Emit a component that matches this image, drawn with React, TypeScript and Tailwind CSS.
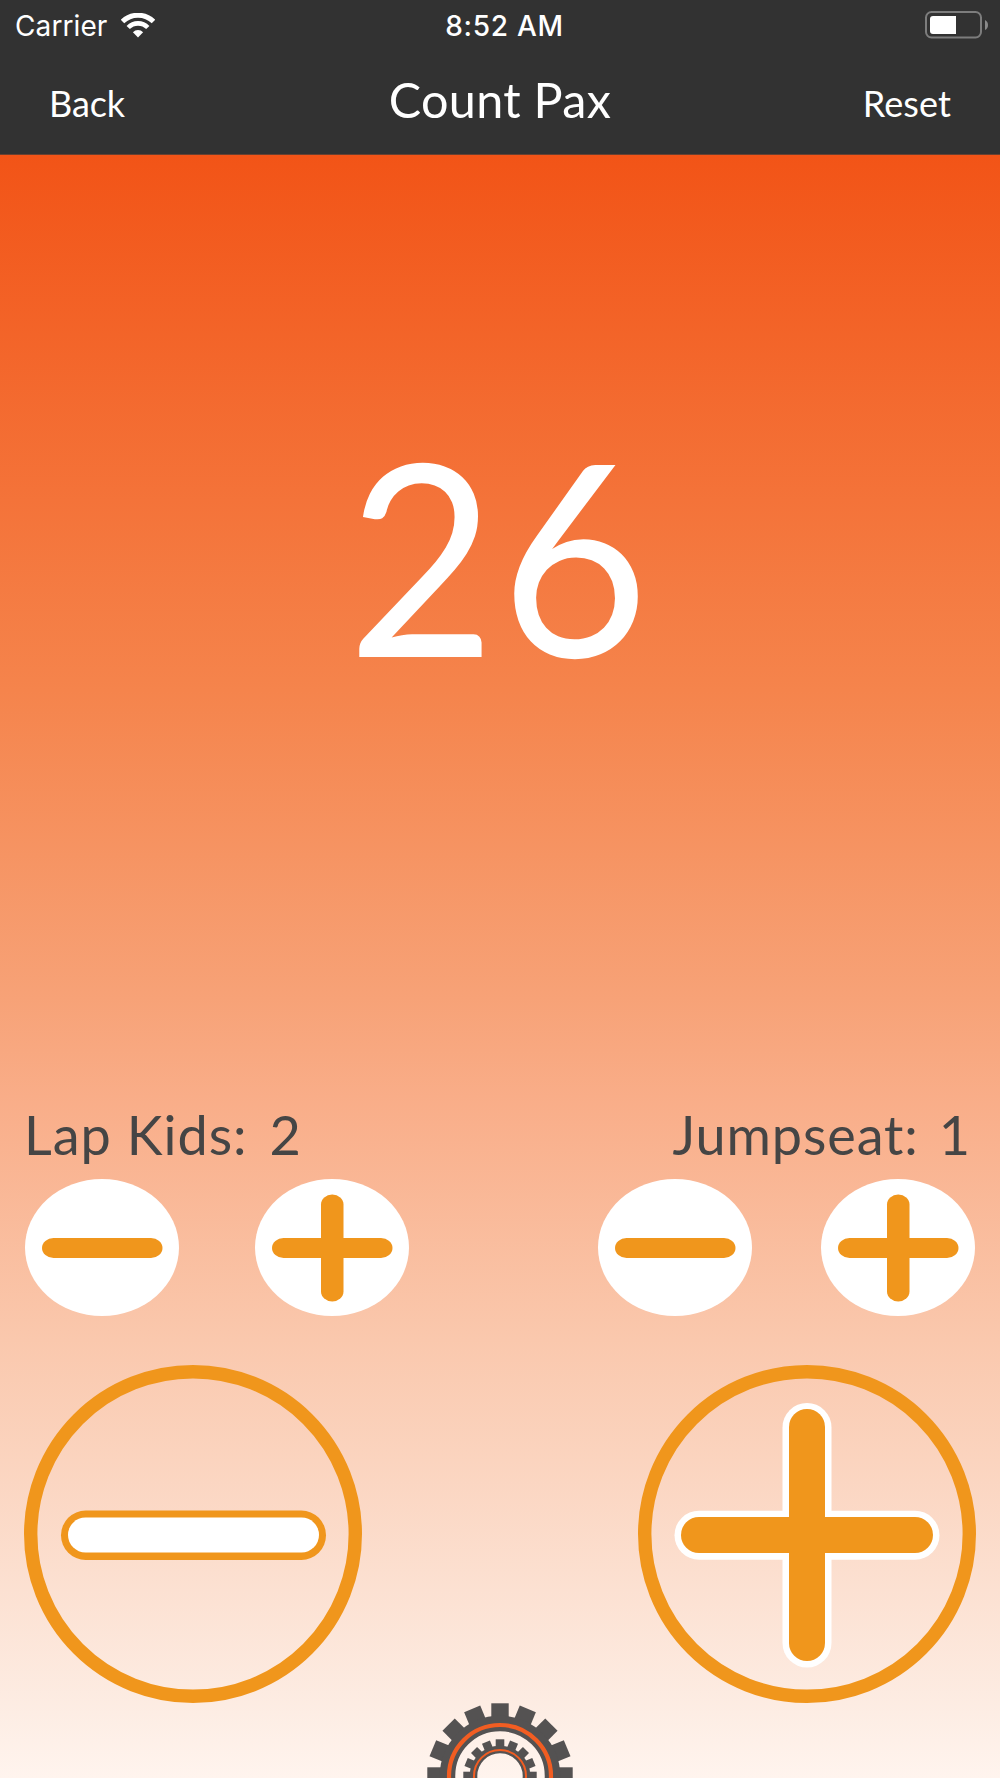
import { useState } from 'react';

const ACCENT = '#f0961c';
const TEETH = Array.from({ length: 16 }, (_, i) => i * 22.5);

function StatusBar() {
  return (
    <div className="grid h-[50px] grid-cols-3 items-center pl-[15px] pr-3 font-['Inter'] text-[28px]">
      <div className="flex items-center gap-3.5">
        <span className="pt-px tracking-[0.1px]">Carrier</span>
        <svg width="34" height="25" viewBox="0 0 34 25" fill="none" stroke="white">
          <path d="M1.5 8.6a22 22 0 0 1 31 0" strokeWidth="5" />
          <path d="M7.2 14.5a13.8 13.8 0 0 1 19.6 0" strokeWidth="4.6" />
          <path d="M11.9 19.2a7.2 7.2 0 0 1 10.2 0L17 24.4z" fill="white" stroke="none" />
        </svg>
      </div>
      <span className="pl-1.5 pt-px text-center font-medium tracking-[0.7px]">8:52 AM</span>
      <div className="flex justify-end">
        <svg width="63" height="28" viewBox="0 0 63 28">
          <rect x="1" y="1" width="55" height="25.5" rx="5.5" fill="none" stroke="#7d7d7d" strokeWidth="2" />
          <path d="M8 5h23v18H8a3 3 0 0 1-3-3V8a3 3 0 0 1 3-3z" fill="white" />
          <path d="M60 9q3 1.500 3 5t-3 5z" fill="#8a8a8a" />
        </svg>
      </div>
    </div>
  );
}

// The small buttons are squashed vertically, so the bars are thinner across than down
function SmallButton({ plus, onClick }: { plus?: boolean; onClick: () => void }) {
  return (
    <button onClick={onClick} aria-label={plus ? 'Add' : 'Remove'}>
      <svg width="154" height="137" viewBox="0 0 154 137" fill={ACCENT}>
        <ellipse cx="77" cy="68.500" rx="77" ry="68.500" fill="white" />
        <rect x="17" y="59" width="120.500" height="20" rx="11.500" ry="10" />
        {plus && <rect x="66" y="15.500" width="22.500" height="107" rx="11.200" ry="10" />}
      </svg>
    </button>
  );
}

function BigButton({ plus, onClick }: { plus?: boolean; onClick: () => void }) {
  return (
    <button onClick={onClick} aria-label={plus ? 'Add passenger' : 'Remove passenger'}>
      <svg width="338" height="338" viewBox="0 0 338 338">
        <circle cx="169" cy="169" r="162.300" fill="none" stroke={ACCENT} strokeWidth="13.400" />
        {plus ? (
          <>
            <g fill="white">
              <rect x="36.500" y="145.700" width="265" height="49" rx="24.500" />
              <rect x="144.500" y="38" width="49" height="264.500" rx="24.500" />
            </g>
            <g fill={ACCENT}>
              <rect x="43" y="152" width="252" height="36" rx="18" />
              <rect x="151" y="44" width="36" height="252" rx="18" />
            </g>
          </>
        ) : (
          <>
            <rect x="37" y="145.500" width="265" height="49.500" rx="24.700" fill={ACCENT} />
            <rect x="44" y="152.500" width="251" height="35" rx="17.500" fill="white" />
          </>
        )}
      </svg>
    </button>
  );
}

function Gear() {
  return (
    <svg width="146" height="75" viewBox="-73 -73 146 75" className="block">
      <g fill="#545252">
        {TEETH.map((a) => (
          <rect key={a} x="-8.700" y="-72.700" width="17.400" height="20" transform={`rotate(${a})`} />
        ))}
      </g>
      <circle r="52.500" fill="none" stroke="#545252" strokeWidth="15.500" />
      <circle r="51" fill="none" stroke="#f25d22" strokeWidth="4.200" />
      <g fill="#545252">
        {TEETH.map((a) => (
          <rect key={a} x="-4.300" y="-36.700" width="8.600" height="10" transform={`rotate(${a})`} />
        ))}
      </g>
      <circle r="26.500" fill="none" stroke="#545252" strokeWidth="7.600" />
      <circle r="26" fill="none" stroke="#f25d22" strokeWidth="2" />
    </svg>
  );
}

export default function App() {
  const [pax, setPax] = useState(26);
  const [lapKids, setLapKids] = useState(2);
  const [jumpseat, setJumpseat] = useState(1);

  const reset = () => {
    setPax(0);
    setLapKids(0);
    setJumpseat(0);
  };

  return (
    <div className="flex h-[1778px] w-[1000px] flex-col overflow-hidden bg-white font-['Lato',sans-serif]">
      <header className="h-[155px] shrink-0 border-b border-[#6b4030] bg-[#323232] text-white">
        <StatusBar />
        <nav className="grid grid-cols-[1fr_auto_1fr] items-center px-[49px]">
          <button className="pt-[21px] text-left text-[36px] tracking-[-0.1px]">Back</button>
          <h1 className="pt-[13px] text-[48.5px] tracking-[0.3px]">Count Pax</h1>
          <button onClick={reset} className="pt-[21px] text-right text-[36px] tracking-[0.1px]">
            Reset
          </button>
        </nav>
      </header>

      <main className="flex flex-1 flex-col bg-[linear-gradient(180deg,#f25417_0%,#f5844c_33%,#f7a277_52%,#f9ad88_58%,#fac8ad_73%,#fdede4_96%,#fff4ee_100%)]">
        <div className="flex h-[940px] justify-center pt-[241px] text-[268px] leading-[314px] text-white">
          <span className="scale-x-[0.955] tracking-[5px]">{pax}</span>
        </div>

        <div className="flex justify-between pl-6 pr-[29px] text-[54px] leading-[80px] text-[#454545]">
          <div className="flex gap-[22px] tracking-[1px]">
            <span>Lap Kids:</span>
            <span>{lapKids}</span>
          </div>
          <div className="flex gap-[20px] tracking-[0.9px]">
            <span>Jumpseat:</span>
            <span>{jumpseat}</span>
          </div>
        </div>

        <div className="mt-1 flex justify-between px-[25px]">
          <div className="flex gap-[76px]">
            <SmallButton onClick={() => setLapKids(Math.max(0, lapKids - 1))} />
            <SmallButton plus onClick={() => setLapKids(lapKids + 1)} />
          </div>
          <div className="flex gap-[69px]">
            <SmallButton onClick={() => setJumpseat(Math.max(0, jumpseat - 1))} />
            <SmallButton plus onClick={() => setJumpseat(jumpseat + 1)} />
          </div>
        </div>

        <div className="mt-[49px] flex justify-between px-6">
          <BigButton onClick={() => setPax(Math.max(0, pax - 1))} />
          <BigButton plus onClick={() => setPax(pax + 1)} />
        </div>

        <div className="flex justify-center">
          <Gear />
        </div>
      </main>
    </div>
  );
}
